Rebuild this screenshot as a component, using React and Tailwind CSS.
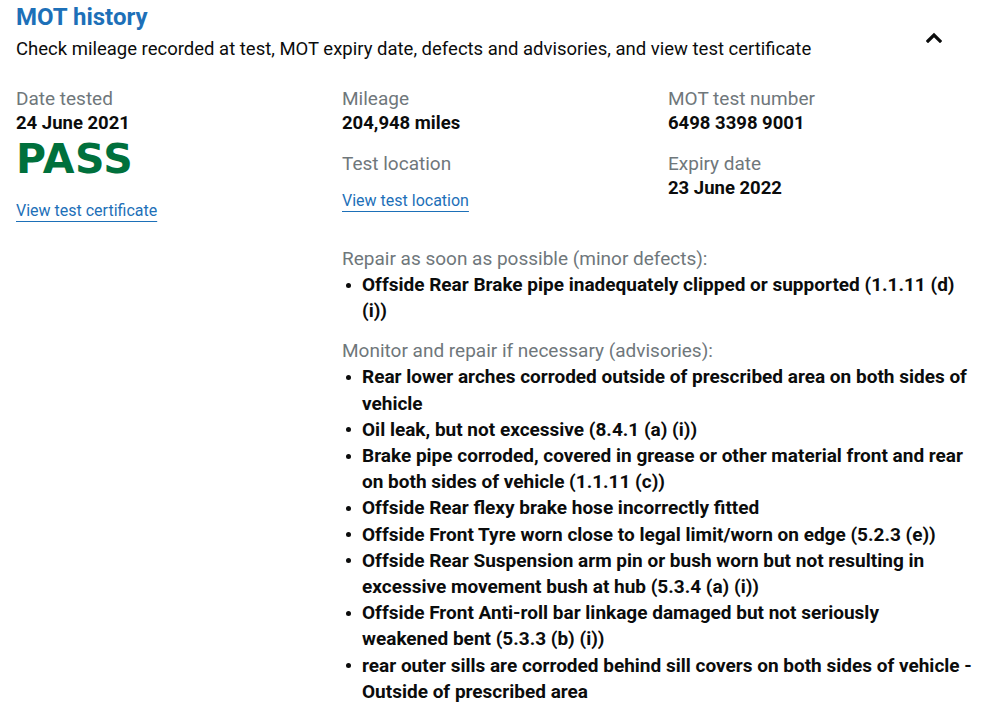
import React from "react";

const minorDefects = [
  ["Offside Rear Brake pipe inadequately clipped or supported (1.1.11 (d)", "(i))"],
];

const advisories = [
  ["Rear lower arches corroded outside of prescribed area on both sides of", "vehicle"],
  ["Oil leak, but not excessive (8.4.1 (a) (i))"],
  ["Brake pipe corroded, covered in grease or other material front and rear", "on both sides of vehicle (1.1.11 (c))"],
  ["Offside Rear flexy brake hose incorrectly fitted"],
  ["Offside Front Tyre worn close to legal limit/worn on edge (5.2.3 (e))"],
  ["Offside Rear Suspension arm pin or bush worn but not resulting in", "excessive movement bush at hub (5.3.4 (a) (i))"],
  ["Offside Front Anti-roll bar linkage damaged but not seriously", "weakened bent (5.3.3 (b) (i))"],
  ["rear outer sills are corroded behind sill covers on both sides of vehicle -", "Outside of prescribed area"],
];

function Label({ children, className = "" }) {
  return (
    <div className={`text-[19px] leading-[25px] text-[#6f777b] ${className}`}>{children}</div>
  );
}

function Value({ children }) {
  return (
    <div className="text-[18.5px] leading-[25px] font-bold text-[#0b0c0c]">{children}</div>
  );
}

function Link({ children, className = "" }) {
  return (
    <a
      href="#"
      className={`block w-fit text-[16px] leading-[20px] text-[#1d70b8] underline decoration-1 underline-offset-[5px] ${className}`}
    >
      {children}
    </a>
  );
}

function DefectList({ items, className = "" }) {
  return (
    <ul className={className}>
      {items.map((lines, i) => (
        <li key={i} className="flex text-[19px] leading-[26.2px] font-bold text-[#0b0c0c]">
          <span className="w-[20px] shrink-0">
            <span className="block w-[5px] h-[5px] rounded-full bg-[#0b0c0c] ml-[4px] mt-[10.5px]" />
          </span>
          <span className="whitespace-nowrap">
            {lines.map((l, j) => (
              <React.Fragment key={j}>
                {j > 0 && <br />}
                {l}
              </React.Fragment>
            ))}
          </span>
        </li>
      ))}
    </ul>
  );
}

export default function App() {
  return (
    <div className="min-h-screen bg-white font-['Roboto',sans-serif] text-[#0b0c0c]">
      <div className="flex px-4 pt-[2px]">
        <div className="flex-1">
          <h2 className="text-[24px] leading-[30px] font-bold text-[#1d70b8]">MOT history</h2>
          <p className="mt-[5px] text-[18.5px] leading-[25px] text-[#0b0c0c]">
            Check mileage recorded at test, MOT expiry date, defects and advisories, and view test certificate
          </p>
        </div>
        <div className="pt-[30px] mr-[45px]">
          <svg width="16" height="11" viewBox="0 0 16 11" aria-hidden="true">
            <polyline
              points="2,9 8,3 14,9"
              fill="none"
              stroke="#0b0c0c"
              strokeWidth="3.2"
              strokeLinecap="square"
              strokeLinejoin="miter"
            />
          </svg>
        </div>
      </div>

      <div className="grid grid-cols-[326px_326px_1fr] px-4 mt-[24px]">
        <div>
          <Label>Date tested</Label>
          <Value>24 June 2021</Value>
          <div className="mt-[-1.5px] font-['DejaVu_Sans',sans-serif] text-[41px] leading-[48px] font-bold tracking-[0.5px] text-[#00703c]">
            PASS
          </div>
          <Link className="mt-[18px]">View test certificate</Link>
        </div>
        <div>
          <Label>Mileage</Label>
          <Value>204,948 miles</Value>
          <Label className="mt-[15px]">Test location</Label>
          <Link className="mt-[15px]">View test location</Link>
        </div>
        <div>
          <Label>MOT test number</Label>
          <Value>6498 3398 9001</Value>
          <Label className="mt-[15px]">Expiry date</Label>
          <Value>23 June 2022</Value>
        </div>

        <div className="col-start-2 col-span-2 mt-[25px]">
          <Label>Repair as soon as possible (minor defects):</Label>
          <DefectList items={minorDefects} className="mt-[1.5px]" />
          <Label className="mt-[14px]">Monitor and repair if necessary (advisories):</Label>
          <DefectList items={advisories} className="mt-[1px]" />
        </div>
      </div>
    </div>
  );
}
